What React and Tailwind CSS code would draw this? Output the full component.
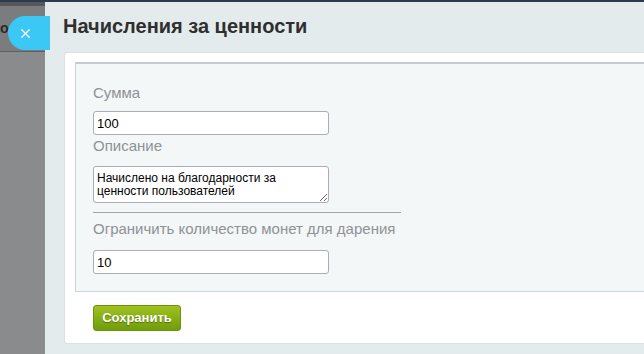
import { X } from 'lucide-react';

const labelCls = 'block text-[15px] leading-[20px] text-[#8e9296]';
const inputCls =
    'block h-[24px] w-[236px] rounded-[3px] border border-[#a9aeb5] bg-white px-[3px] text-[13px] text-black outline-none';

export default function App() {
    return (
        <div className="relative flex h-[354px] w-[644px] overflow-hidden font-['Liberation_Sans',Arial,sans-serif]">
            {/* top line */}
            <div className="absolute left-0 right-0 top-0 z-20 h-[2px] bg-[#2c3b50]" />

            {/* page behind the slider */}
            <div className="flex w-[45px] shrink-0 flex-col bg-[#898b8d]">
                <div className="h-[6px] bg-[#55585b]" />
                <div className="flex h-[45px] items-center bg-[#7a7c7e] text-[14px] font-bold text-[#2a2a2a]">
                    <span>о</span>
                </div>
                <div className="h-px bg-[#5d5f61]" />
            </div>

            {/* close button */}
            <button className="absolute left-[8px] top-[16px] z-10 flex h-[34px] w-[42px] items-center rounded-l-full bg-[#3bc8f5] pl-[10px] text-white">
                <X size={15} strokeWidth={2} />
            </button>

            {/* slider panel */}
            <div className="flex flex-1 flex-col bg-[#e4ebed] pl-[19px] pt-[2px]">
                <h1 className="-ml-px h-[50px] pt-[12px] text-[20px] font-bold leading-[24px] text-[#2f2f2f]">
                    Начисления за ценности
                </h1>

                <div className="flex flex-1 flex-col rounded-l-[3px] border border-r-0 border-[#dbe1e3] bg-white pl-[10px] pt-[9px]">
                    <div className="border border-r-0 border-t-2 border-[#cdd4d7] border-t-[#c5cdd0] bg-[#f4f7f8] pb-[17px] pl-[17px] pt-[19px]">
                        <label className={labelCls}>Сумма</label>
                        <input className={`${inputCls} mt-[8px]`} defaultValue="100" />

                        <label className={`${labelCls} mt-px`}>Описание</label>
                        <textarea
                            className="mt-[10px] block h-[37px] w-[236px] rounded-[3px] border border-[#a9aeb5] bg-white px-[3px] pt-[5px] text-[12px] leading-[13px] text-black outline-none"
                            defaultValue="Начислено на благодарности за ценности пользователей"
                        />

                        <div className="mt-[9px] h-px w-[308px] bg-[#a3a8ad]" />

                        <label className={`${labelCls} mt-[6px]`}>Ограничить количество монет для дарения</label>
                        <input className={`${inputCls} mt-[11px] h-[23px]`} defaultValue="10" />
                    </div>

                    <div className="pl-[18px] pt-[13px]">
                        <button className="h-[26px] w-[88px] rounded-[3px] border border-[#6f930f] bg-gradient-to-b from-[#9fc21f] to-[#6f9d09] text-[13px] font-bold text-white [text-shadow:0_1px_1px_rgba(0,0,0,0.35)]">
                            Сохранить
                        </button>
                    </div>
                </div>
                <div className="h-[10px]" />
            </div>
        </div>
    );
}
